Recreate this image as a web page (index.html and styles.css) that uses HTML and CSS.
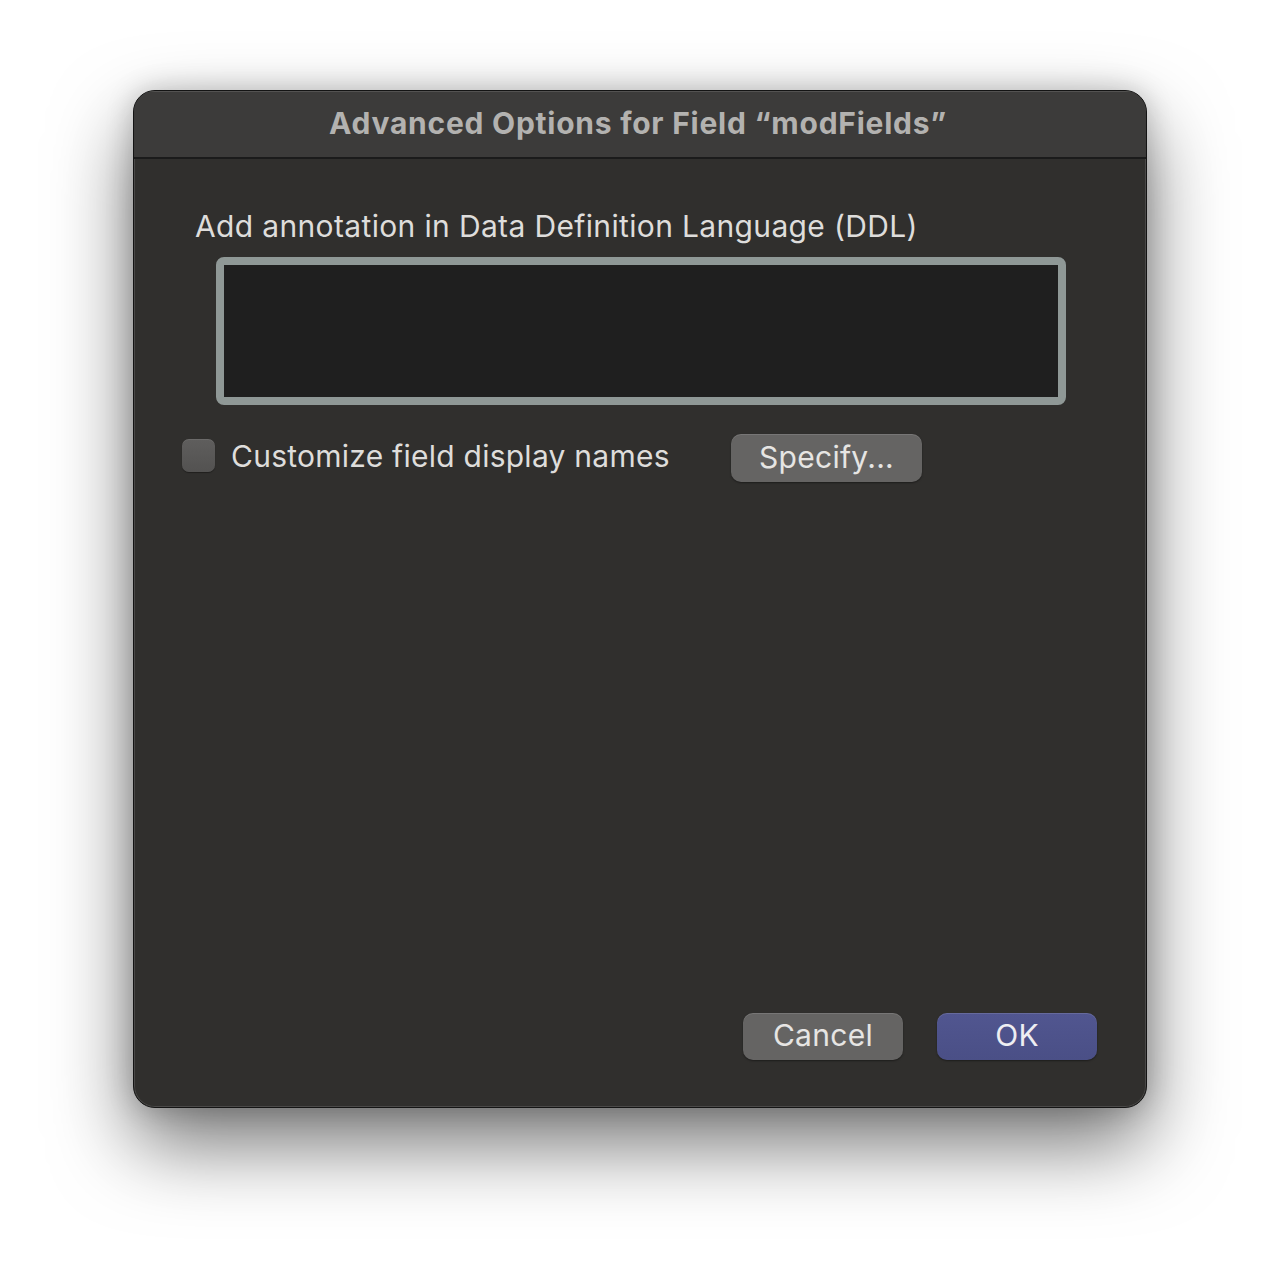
FILE: index.html
```html
<!DOCTYPE html>
<html lang="en">
<head>
<meta charset="utf-8">
<title>Advanced Options</title>
<link rel="stylesheet" href="styles.css">
</head>
<body>
<div class="window">
  <div class="titlebar">Advanced Options for Field “modFields”</div>
  <div class="content">
    <div class="label">Add annotation in Data Definition Language (DDL)</div>
    <div class="field"></div>
    <div class="check-row">
      <span class="checkbox"></span>
      <span class="check-label">Customize field display names</span>
      <button class="btn specify">Specify...</button>
    </div>
    <div class="actions">
      <button class="btn cancel">Cancel</button>
      <button class="btn ok">OK</button>
    </div>
  </div>
</div>
</body>
</html>
```
FILE: styles.css
```css
html, body {
  margin: 0;
  padding: 0;
  background: #ffffff;
}
body {
  font-family: Inter, "Noto Sans", "Liberation Sans", sans-serif;
  width: 1280px;
  height: 1285px;
  overflow: hidden;
}
.window {
  margin: 90px 0 0 133px;
  width: 1012px;
  height: 1016px;
  border: 1px solid #141414;
  border-radius: 22px;
  background: #302f2d;
  box-shadow: inset 0 0 0 1px rgba(255,255,255,0.13), 0 36px 80px rgba(0,0,0,0.55), 0 0 28px rgba(0,0,0,0.2);
  display: flex;
  flex-direction: column;
  overflow: hidden;
}
.titlebar {
  height: 66px;
  flex: none;
  background: #3c3b3a;
  border-bottom: 2px solid #1b1b1b;
  color: #b3b2b0;
  font-weight: 700;
  font-size: 30px;
  letter-spacing: 0.75px;
  line-height: 64px;
  text-align: center;
  box-shadow: inset 0 1px 0 rgba(255,255,255,0.12);
  padding-right: 4px;
}
.content {
  flex: 1;
  display: flex;
  flex-direction: column;
  padding: 47px 49px 47px 48px;
}
.label {
  color: #dedddb;
  font-size: 30px;
  letter-spacing: 0.35px;
  line-height: 40px;
  margin-left: 13px;
}
.field {
  margin: 11px 31px 0 34px;
  height: 132px;
  border: 8px solid #8f9896;
  border-radius: 8px;
  background: #1f1f1f;
}
.check-row {
  margin-top: 29px;
  height: 48px;
  display: flex;
  align-items: center;
}
.checkbox {
  width: 33px;
  height: 33px;
  border-radius: 7px;
  background: linear-gradient(#5f5e5d, #535251);
  box-shadow: inset 0 1px 0 rgba(255,255,255,0.08), 0 1px 1px rgba(0,0,0,0.35);
  margin-top: -5px;
  flex: none;
}
.check-label {
  color: #dedddb;
  font-size: 30px;
  letter-spacing: 0.25px;
  margin-left: 16px;
  width: 500px;
  margin-top: -5px;
}
.btn {
  font-family: inherit;
  font-size: 30px;
  letter-spacing: 0.3px;
  color: #e6e5e3;
  border: none;
  border-radius: 10px;
  background: #656463;
  box-shadow: inset 0 1px 0 rgba(255,255,255,0.12), 0 1px 2px rgba(0,0,0,0.4);
  height: 48px;
  padding: 0 0 3px 0;
  cursor: default;
}
.specify {
  width: 191px;
}
.actions {
  margin-top: auto;
  display: flex;
  justify-content: flex-end;
  gap: 34px;
}
.cancel, .ok {
  width: 160px;
  height: 47px;
}
.ok {
  background: linear-gradient(#515690, #4a4f86);
  color: #eeeef2;
}
```
